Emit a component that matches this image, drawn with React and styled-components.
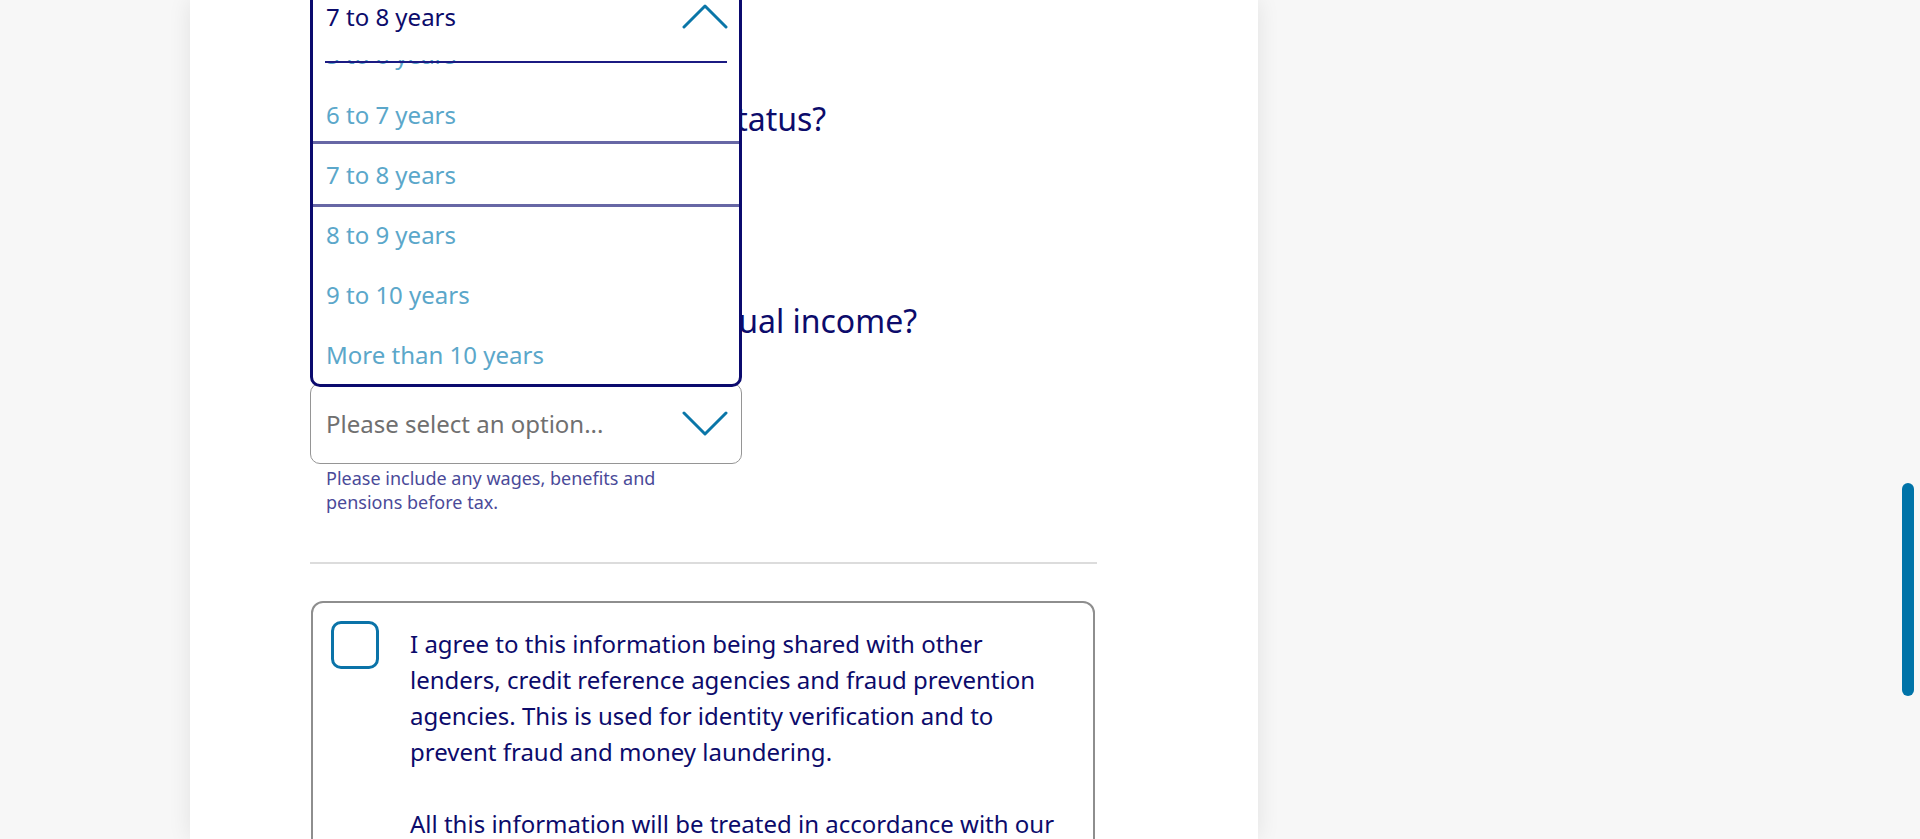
import React from 'react'
import styled, { createGlobalStyle } from 'styled-components'

const GlobalStyle = createGlobalStyle`
    html, body {
        margin:0;
        padding:0;
        background:#f7f7f7;
        overflow:hidden;
    }
    body {
        font-family:"Noto Sans", "Open Sans", sans-serif;
        color:#0c0b6b;
    }
`

const Chevron = ({ up }) => (
    <svg width="46" height="26" viewBox="0 0 46 26" fill="none">
        <polyline
            points={up ? '2,24 23,3 44,24' : '2,2 23,23 44,2'}
            stroke="#0a76a8"
            strokeWidth="3"
            strokeLinecap="round"
            strokeLinejoin="round"
        />
    </svg>
)

const options = [
    '5 to 6 years',
    '6 to 7 years',
    '7 to 8 years',
    '8 to 9 years',
    '9 to 10 years',
    'More than 10 years',
]

const App = () => {
    return (
        <>
            <GlobalStyle />
            <Page>
                <Card>
                    <Form>
                        <OpenSelect>
                            <SelectBox>
                                <Value>7 to 8 years</Value>
                            </SelectBox>
                            <Panel>
                                <PanelHeader>
                                    <Value>7 to 8 years</Value>
                                    <Chevron up />
                                </PanelHeader>
                                <OptionList>
                                    {options.map((o) => (
                                        <Option key={o} selected={o === '7 to 8 years'}>
                                            {o}
                                        </Option>
                                    ))}
                                </OptionList>
                            </Panel>
                        </OpenSelect>

                        <Question>What is your employment status?</Question>
                        <SelectBox gap>
                            <Placeholder>Please select an option...</Placeholder>
                            <Chevron />
                        </SelectBox>

                        <Question>What is your combined annual income?</Question>
                        <SelectBox gap>
                            <Placeholder>Please select an option...</Placeholder>
                            <Chevron />
                        </SelectBox>
                        <Helper>
                            Please include any wages, benefits and
                            <br />
                            pensions before tax.
                        </Helper>

                        <Divider />

                        <Consent>
                            <CheckSquare />
                            <ConsentText>
                                <Line>I agree to this information being shared with other</Line>
                                <Line>lenders, credit reference agencies and fraud prevention</Line>
                                <Line>agencies. This is used for identity verification and to</Line>
                                <Line>prevent fraud and money laundering.</Line>
                                <Gap />
                                <Line>All this information will be treated in accordance with our</Line>
                                <Line>Privacy Notice.</Line>
                            </ConsentText>
                        </Consent>
                    </Form>
                </Card>
            </Page>
            <ScrollThumb />
        </>
    )
}

export default App


const Page = styled.div`
    display:flex;
    padding-left:190px;
    height:100vh;
`

const Card = styled.main`
    width:1068px;
    background:#fff;
    box-shadow:0 0 22px rgba(0,0,0,0.09);
    padding:0 161px 0 120px;
    box-sizing:border-box;
`

const Form = styled.div`
    display:flex;
    flex-direction:column;
    margin-top:-21px;
`

const OpenSelect = styled.div`
    position:relative;
    width:432px;
`

const SelectBox = styled.div`
    width:432px;
    height:81px;
    box-sizing:border-box;
    border:1px solid #959595;
    border-radius:10px;
    display:flex;
    align-items:center;
    justify-content:space-between;
    padding:0 13px 0 15px;
    margin-top:${(p) => (p.gap ? '42px' : '0')};
    background:#fff;
`

const Value = styled.span`
    font-size:24px;
    color:#0c0b6b;
`

const Placeholder = styled.span`
    font-size:24px;
    color:#707070;
`

const Panel = styled.div`
    position:absolute;
    top:0;
    left:0;
    width:432px;
    box-sizing:border-box;
    border:3px solid #0b0a6e;
    border-radius:10px;
    background:#fff;
    overflow:hidden;
    z-index:2;
`

const PanelHeader = styled.div`
    position:relative;
    z-index:1;
    height:78px;
    box-sizing:border-box;
    padding:0 11px 10px 13px;
    display:flex;
    align-items:center;
    justify-content:space-between;
    background:#fff;

    &::after {
        content:'';
        position:absolute;
        left:12px;
        right:12px;
        bottom:-3px;
        height:2px;
        background:#1b1a82;
    }
`

const OptionList = styled.ul`
    list-style:none;
    margin:-36px 0 0 0;
    padding:0;
`

const Option = styled.li`
    height:60px;
    display:flex;
    align-items:center;
    padding-left:13px;
    font-size:24px;
    color:#5ba7ca;
    box-shadow:${(p) => (p.selected ? '0 -3px 0 #6767a5, 0 3px 0 #6767a5' : 'none')};
`

const Question = styled.h2`
    margin:39px 0 0 0;
    padding-left:16px;
    font-size:32px;
    line-height:40px;
    font-weight:400;
    color:#0c0b6b;
    white-space:nowrap;
`

const Helper = styled.p`
    margin:2px 0 0 0;
    padding-left:16px;
    font-size:18px;
    line-height:24px;
    color:#4a4a99;
`

const Divider = styled.hr`
    margin:48px 0 0 0;
    border:none;
    height:2px;
    background:#dcdcdc;
    width:787px;
`

const Consent = styled.div`
    margin-top:37px;
    margin-left:1px;
    width:784px;
    box-sizing:border-box;
    border:2px solid #8e8e8e;
    border-radius:12px;
    padding:18px 30px 30px 18px;
    display:flex;
    align-items:flex-start;
    gap:31px;
`

const CheckSquare = styled.span`
    flex:none;
    width:48px;
    height:48px;
    box-sizing:border-box;
    border:3px solid #0a73a8;
    border-radius:10px;
`

const ConsentText = styled.div`
    padding-top:5px;
    font-size:24px;
    line-height:36px;
    color:#0c0b6b;
`

const Line = styled.div`
    white-space:nowrap;
`

const Gap = styled.div`
    height:36px;
`

const ScrollThumb = styled.div`
    position:fixed;
    top:483px;
    right:6px;
    width:12px;
    height:213px;
    border-radius:6px;
    background:#0073a8;
`
